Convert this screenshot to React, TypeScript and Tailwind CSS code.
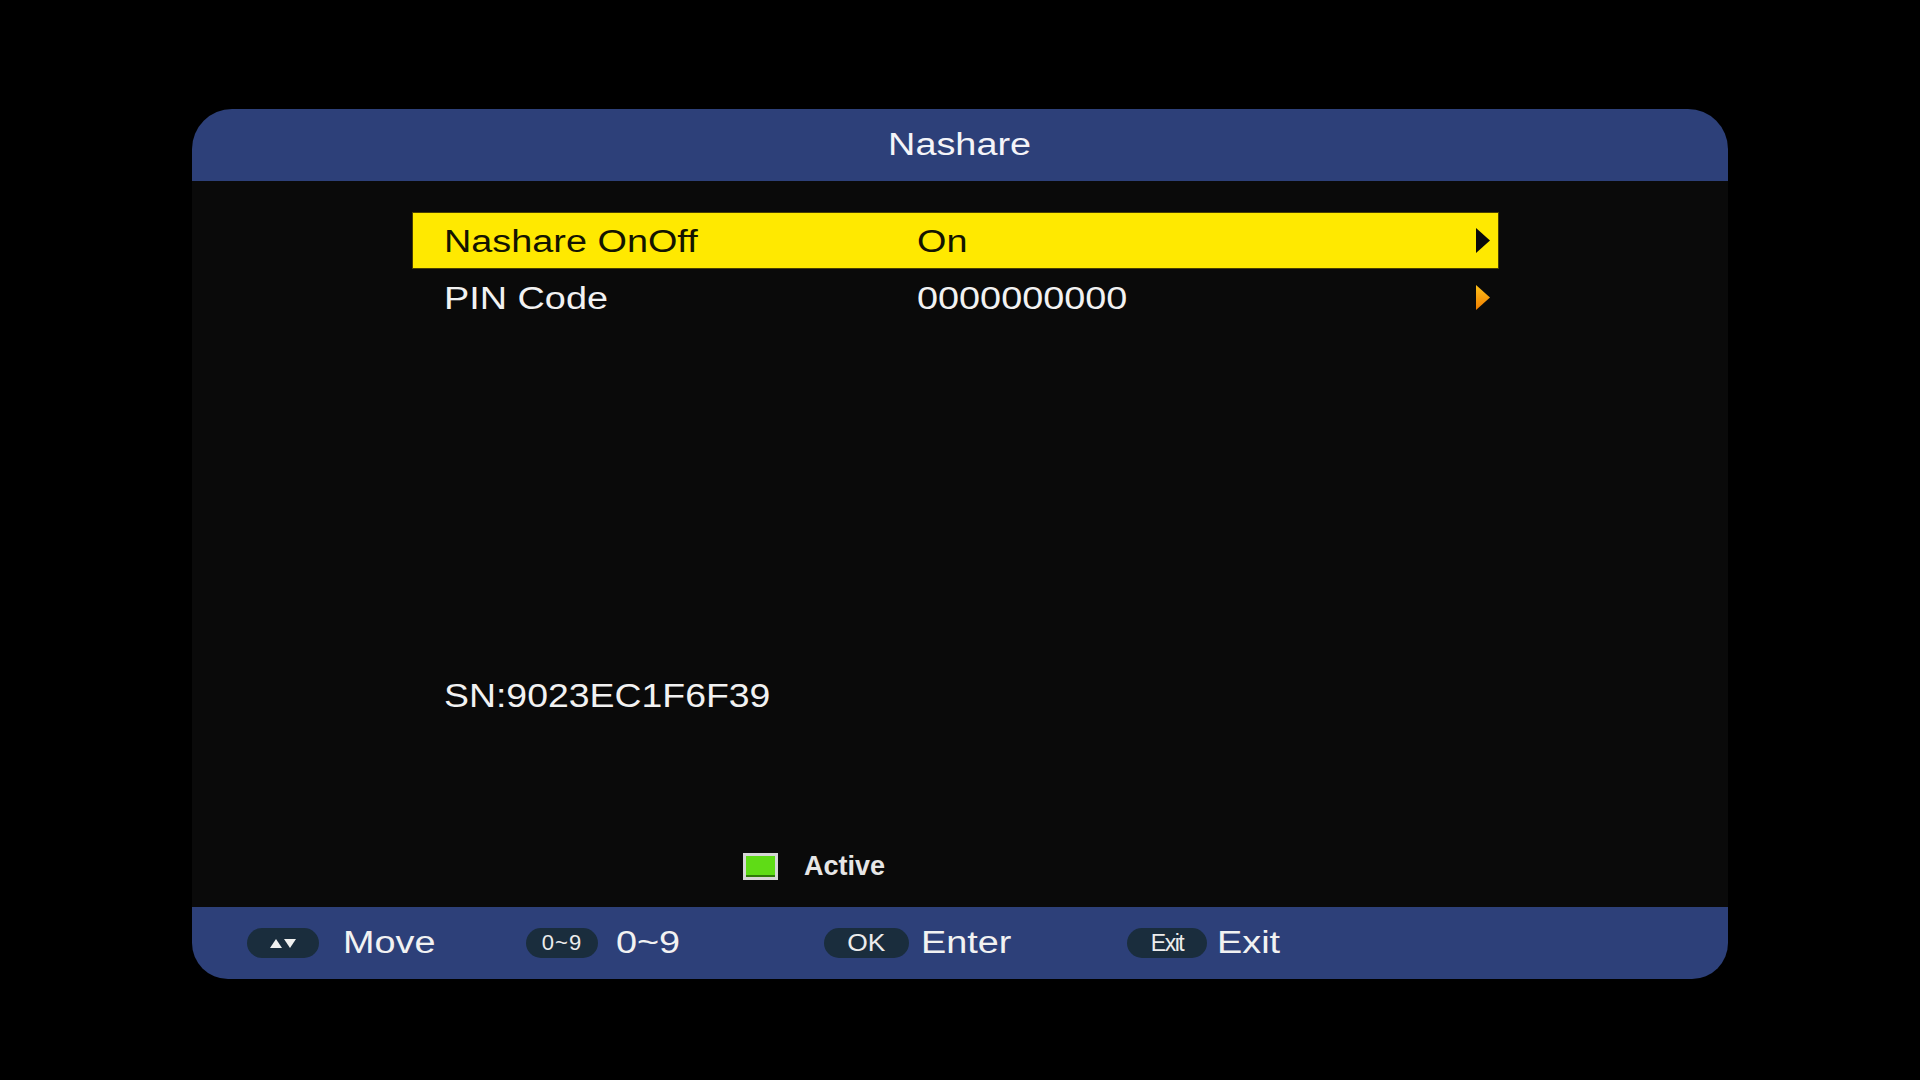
import React from "react";

const FONT = { fontFamily: '"Liberation Sans", Arial, Helvetica, sans-serif' };

function Wide({ children, className = "" }: { children: React.ReactNode; className?: string }) {
  // The receiver's OSD font is rendered wider than it is tall
  return <span className={`inline-block origin-left scale-x-[1.22] whitespace-nowrap ${className}`}>{children}</span>;
}

function Arrow({ selected }: { selected: boolean }) {
  return (
    <svg width="16" height="27" viewBox="0 0 16 27" className="ml-auto mr-[7px]">
      <defs>
        <linearGradient id="orangeArrow" x1="0" y1="0" x2="0" y2="1">
          <stop offset="0" stopColor="#ffc21a" />
          <stop offset="1" stopColor="#f07d00" />
        </linearGradient>
      </defs>
      <polygon points="1,1 15,13.5 1,26" fill={selected ? "#0a0a0a" : "url(#orangeArrow)"} />
    </svg>
  );
}

function MenuRow({ label, value, selected }: { label: string; value: string; selected: boolean }) {
  return (
    <div
      className={`flex h-[57px] w-[1087px] items-center ${
        selected ? "border border-[#4a4000] bg-[#ffe900] text-[#141400]" : "border border-transparent text-[#f2f2f2]"
      }`}
    >
      <div className="w-[504px] pl-[31px] pt-[2px] text-[31px] leading-[40px]">
        <Wide>{label}</Wide>
      </div>
      <div className="pt-[2px] text-[31px] leading-[40px]">
        <Wide>{value}</Wide>
      </div>
      <Arrow selected={selected} />
    </div>
  );
}

function Pill({ children, width }: { children: React.ReactNode; width: string }) {
  return (
    <div className={`flex h-[30px] ${width} items-center justify-center rounded-full bg-[#1a2d3d] text-[#ececec]`}>
      {children}
    </div>
  );
}

function FooterItem({
  pill,
  label,
  groupWidth,
  gap,
}: {
  pill: React.ReactNode;
  label: string;
  groupWidth: string;
  gap: string;
}) {
  return (
    <div className={`flex items-center ${groupWidth} ${gap}`}>
      {pill}
      <div className="text-[31px] leading-[40px] text-[#f2f2f2]">
        <Wide>{label}</Wide>
      </div>
    </div>
  );
}

export default function App() {
  return (
    <div className="h-[1080px] w-[1920px] bg-black pl-[192px] pt-[109px]" style={FONT}>
      <div className="flex w-[1536px] flex-col">
        {/* Title bar */}
        <div className="flex h-[72px] items-center justify-center rounded-t-[40px] bg-[#2d4079]">
          <span className="inline-block scale-x-[1.22] text-[31px] leading-[40px] text-[#f4f4f8]">Nashare</span>
        </div>

        {/* Menu body */}
        <div className="flex h-[726px] flex-col bg-[#0a0a0a]">
          <div className="flex flex-col pl-[220px] pt-[31px]">
            <MenuRow label="Nashare OnOff" value="On" selected />
            <MenuRow label="PIN Code" value="0000000000" selected={false} />
          </div>

          <div className="mt-[349px] pl-[252px] text-[34px] leading-[40px] text-[#f2f2f2]">
            <span className="inline-block origin-left scale-x-[1.1] whitespace-nowrap">SN:9023EC1F6F39</span>
          </div>

          <div className="mt-[136px] flex h-[30px] items-center pl-[551px]">
            <div className="h-[27px] w-[35px] border-[3px] border-[#d6d6d6] bg-[#5fdc16] shadow-[inset_0_-2px_0_#2f7a08]" />
            <span className="ml-[26px] text-[27px] font-bold leading-[30px] text-[#e6e6e6]">Active</span>
          </div>
        </div>

        {/* Key hints */}
        <div className="flex h-[72px] items-center rounded-b-[36px] bg-[#2d4079] pl-[55px]">
          <FooterItem
            groupWidth="w-[279px]"
            gap="gap-[24px]"
            label="Move"
            pill={
              <Pill width="w-[72px]">
                <svg width="28" height="12" viewBox="0 0 28 12">
                  <polygon points="1,11 7,2 13,11" fill="#f0f0f0" />
                  <polygon points="15,2 27,2 21,11" fill="#f0f0f0" />
                </svg>
              </Pill>
            }
          />
          <FooterItem
            groupWidth="w-[298px]"
            gap="gap-[18px]"
            label="0~9"
            pill={
              <Pill width="w-[72px]">
                <span className="text-[22px] leading-none tracking-[1px]">0~9</span>
              </Pill>
            }
          />
          <FooterItem
            groupWidth="w-[303px]"
            gap="gap-[12px]"
            label="Enter"
            pill={
              <Pill width="w-[85px]">
                <span className="inline-block scale-x-[1.1] text-[24px] leading-none">OK</span>
              </Pill>
            }
          />
          <FooterItem
            groupWidth="w-[250px]"
            gap="gap-[10px]"
            label="Exit"
            pill={
              <Pill width="w-[80px]">
                <span className="text-[23px] leading-none tracking-[-1.5px]">Exit</span>
              </Pill>
            }
          />
        </div>
      </div>
    </div>
  );
}
